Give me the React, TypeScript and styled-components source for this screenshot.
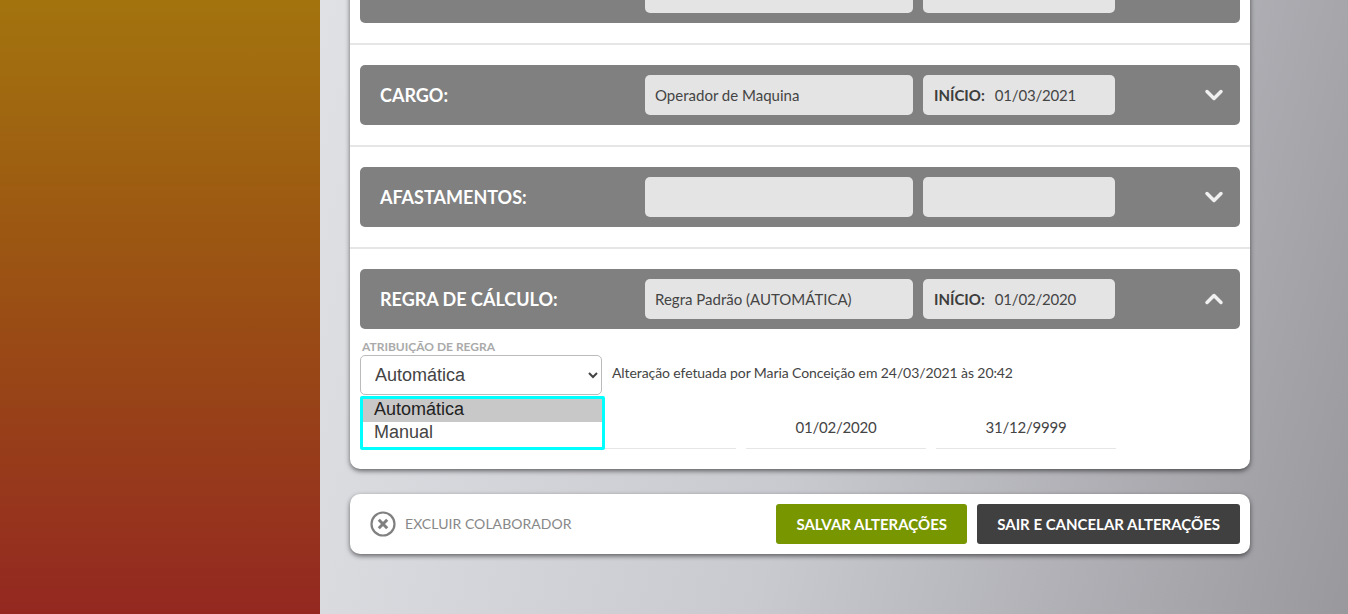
import React from 'react';
import styled, { createGlobalStyle } from 'styled-components';
import { ChevronDown, ChevronUp } from 'lucide-react';

const GlobalStyle = createGlobalStyle`
  html, body {
    margin: 0;
    padding: 0;
    height: 100%;
    overflow: hidden;
  }
  body {
    font-family: Lato, "Liberation Sans", sans-serif;
  }
  * {
    box-sizing: border-box;
  }
`;

const Page = styled.div`
  display: flex;
  width: 1348px;
  height: 614px;
  overflow: hidden;
`;

const Sidebar = styled.aside`
  flex: 0 0 320px;
  background: linear-gradient(180deg, #a3740e 0%, #9a4e14 50%, #942821 100%);
`;

const Main = styled.main`
  flex: 1;
  padding: 0 98px 0 30px;
  background: linear-gradient(105deg, #e0e1e5 0%, #c9cacf 50%, #98989d 100%);
`;

const Card = styled.section`
  margin-top: -57px;
  background: #fff;
  border-radius: 10px;
  box-shadow: 0 2px 5px rgba(0, 0, 0, 0.55);
`;

const Row = styled.div`
  padding: 20px 10px;
  border-bottom: 2px solid #e6e6e6;
`;

const LastRow = styled.div`
  padding: 20px 10px 20px;
`;

const Bar = styled.div`
  display: flex;
  align-items: center;
  height: 60px;
  padding: 0 12px 0 20px;
  background: #808080;
  border-radius: 5px;
`;

const BarTitle = styled.div`
  flex: 0 0 265px;
  font-size: 18px;
  font-weight: 700;
  color: #fff;
`;

const Pill = styled.div<{ $width: number }>`
  display: flex;
  align-items: center;
  gap: 10px;
  width: ${props => props.$width}px;
  height: 40px;
  margin-right: 10px;
  padding: 0 10px;
  background: #e4e4e4;
  border-radius: 5px;
  font-size: 15px;
  color: #444;
`;

const PillLabel = styled.span`
  margin-left: 1px;
  font-weight: 700;
  color: #3d3d3d;
`;

const DateText = styled.span`
  letter-spacing: -0.2px;
`;

const Toggle = styled.span`
  display: flex;
  margin-left: auto;
  color: #f0f0f0;
`;

const RulePanel = styled.div`
  position: relative;
  margin-top: 10px;
`;

const FieldLabel = styled.div`
  height: 16px;
  padding-left: 2px;
  font-size: 12px;
  line-height: 16px;
  font-weight: 700;
  color: #aaa;
`;

const SelectRow = styled.div`
  display: flex;
  align-items: center;
  gap: 10px;
`;

const RuleSelect = styled.select`
  width: 242px;
  height: 40px;
  padding: 0 6px 0 10px;
  background: #fff;
  border: 1px solid #bbb;
  border-radius: 5px;
  font-family: "Liberation Sans", Arial, sans-serif;
  font-size: 18px;
  color: #444;
`;

const Note = styled.span`
  position: relative;
  top: -3px;
  font-size: 14px;
  letter-spacing: -0.09px;
  color: #444;
`;

const DropList = styled.ul`
  position: absolute;
  z-index: 2;
  top: 57px;
  left: 0;
  width: 245px;
  margin: 0;
  padding: 0 0 2px;
  list-style: none;
  background: #fff;
  border: 3px solid #00ffff;
  border-radius: 2px;
`;

const DropItem = styled.li<{ $active?: boolean }>`
  height: 23px;
  padding-left: 11px;
  background: ${props => (props.$active ? '#c8c8c8' : '#fff')};
  font-family: "Liberation Sans", Arial, sans-serif;
  font-size: 18px;
  line-height: 21px;
  color: ${props => (props.$active ? '#222' : '#444')};
`;

const PeriodRow = styled.div`
  display: grid;
  grid-template-columns: 376px 180px 180px;
  gap: 10px;
  margin-top: 12px;
`;

const PeriodCell = styled.div`
  height: 42px;
  border-bottom: 1px solid #e6e6e6;
  font-size: 15px;
  line-height: 40px;
  letter-spacing: -0.2px;
  text-align: center;
  color: #444;
`;

const Footer = styled.div`
  display: flex;
  align-items: center;
  height: 60px;
  margin-top: 25px;
  padding: 0 10px 0 20px;
  background: #fff;
  border-radius: 10px;
  box-shadow: 0 2px 5px rgba(0, 0, 0, 0.55);
`;

const DeleteLink = styled.div`
  display: flex;
  align-items: center;
  gap: 9px;
  margin-right: auto;
  font-size: 14px;
  line-height: 24px;
  letter-spacing: 0.05px;
  color: #888;
`;

const DeleteText = styled.span`
  margin-top: -1px;
`;

const ActionButton = styled.button<{ $color: string }>`
  height: 40px;
  min-width: 191px;
  margin-left: 10px;
  padding: 0 20px;
  background: ${props => props.$color};
  border: 0;
  border-radius: 3px;
  font-family: inherit;
  font-size: 15px;
  font-weight: 700;
  color: #fff;
`;

const DeleteIcon = () => (
  <svg width="26" height="26" viewBox="0 0 26 26" fill="none" stroke="#808080">
    <circle cx="13" cy="13" r="11.5" strokeWidth="2.2" />
    <path d="M8.8 8.8 17.2 17.2M17.2 8.8 8.8 17.2" strokeWidth="3" />
  </svg>
);

export default function App() {
  return (
    <Page>
      <GlobalStyle />
      <Sidebar />
      <Main>
        <Card>
          <Row>
            <Bar>
              <BarTitle />
              <Pill $width={268} />
              <Pill $width={192} />
            </Bar>
          </Row>
          <Row>
            <Bar>
              <BarTitle>CARGO:</BarTitle>
              <Pill $width={268}>Operador de Maquina</Pill>
              <Pill $width={192}>
                <PillLabel>INÍCIO:</PillLabel> <DateText>01/03/2021</DateText>
              </Pill>
              <Toggle><ChevronDown size={28} strokeWidth={3} /></Toggle>
            </Bar>
          </Row>
          <Row>
            <Bar>
              <BarTitle>AFASTAMENTOS:</BarTitle>
              <Pill $width={268} />
              <Pill $width={192} />
              <Toggle><ChevronDown size={28} strokeWidth={3} /></Toggle>
            </Bar>
          </Row>
          <LastRow>
            <Bar>
              <BarTitle>REGRA DE CÁLCULO:</BarTitle>
              <Pill $width={268}>Regra Padrão (AUTOMÁTICA)</Pill>
              <Pill $width={192}>
                <PillLabel>INÍCIO:</PillLabel> <DateText>01/02/2020</DateText>
              </Pill>
              <Toggle><ChevronUp size={28} strokeWidth={3} /></Toggle>
            </Bar>
            <RulePanel>
              <FieldLabel>ATRIBUIÇÃO DE REGRA</FieldLabel>
              <SelectRow>
                <RuleSelect defaultValue="auto">
                  <option value="auto">Automática</option>
                  <option value="manual">Manual</option>
                </RuleSelect>
                <Note>Alteração efetuada por Maria Conceição em 24/03/2021 às 20:42</Note>
              </SelectRow>
              <DropList>
                <DropItem $active>Automática</DropItem>
                <DropItem>Manual</DropItem>
              </DropList>
              <PeriodRow>
                <PeriodCell />
                <PeriodCell>01/02/2020</PeriodCell>
                <PeriodCell>31/12/9999</PeriodCell>
              </PeriodRow>
            </RulePanel>
          </LastRow>
        </Card>
        <Footer>
          <DeleteLink>
            <DeleteIcon />
            <DeleteText>EXCLUIR COLABORADOR</DeleteText>
          </DeleteLink>
          <ActionButton $color="#789600">SALVAR ALTERAÇÕES</ActionButton>
          <ActionButton $color="#404040">SAIR E CANCELAR ALTERAÇÕES</ActionButton>
        </Footer>
      </Main>
    </Page>
  );
}
